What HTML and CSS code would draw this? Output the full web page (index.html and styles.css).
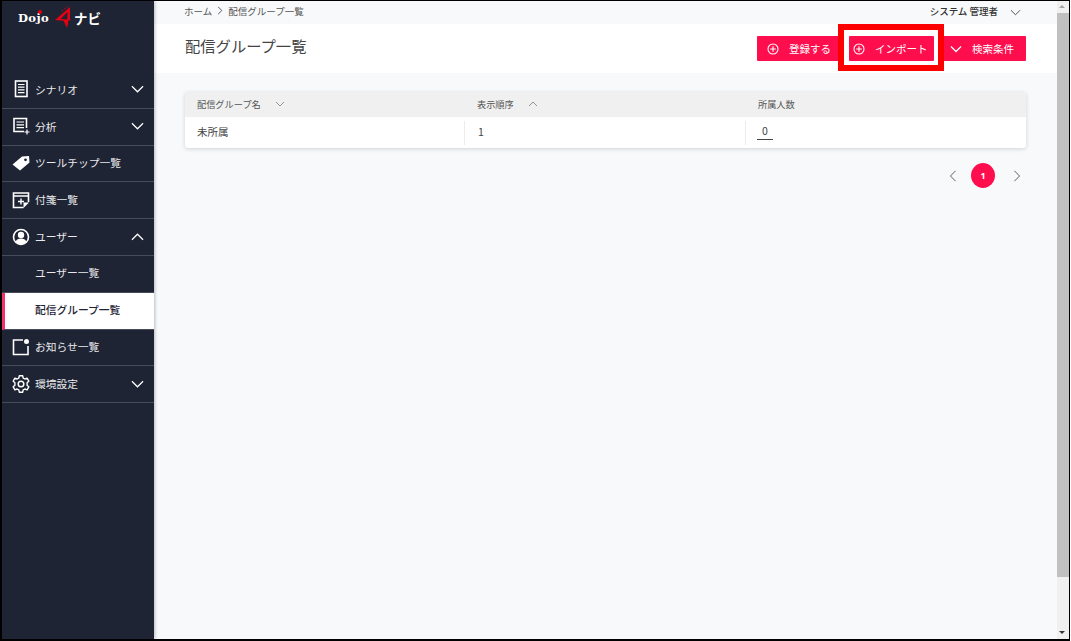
FILE: index.html
```html
<!DOCTYPE html>
<html lang="ja">
<head>
<meta charset="utf-8">
<title>配信グループ一覧</title>
<link rel="stylesheet" href="styles.css">
</head>
<body>
<div class="frame">
  <aside class="sidebar">
    <div class="logo">
      <span class="logo-dojo">Dojo<i class="logo-dot"></i></span>
      <svg class="logo-mark" width="17" height="22" viewBox="0 0 17 22"><path d="M15 1 0 14l8.500 .8L12 22l1.500-7.500 3-.5-1.500-.5zM12.500 6l-.3 7.500-6.500-.5z" fill="#e60012" fill-rule="evenodd"/><path d="M7 5l1-1M9.500 3l1-1M11.500 1.500l1-1" stroke="#e60012" stroke-width="1"/></svg>
      <span class="logo-navi">ナビ</span>
    </div>
    <nav class="menu">
      <div class="item">
        <svg class="ic" viewBox="0 0 18 18"><rect x="3.500" y="1" width="11.500" height="15.500" fill="none" stroke="#fff" stroke-width="1.600"/><path d="M6 4.500h6.500M6 7.200h6.500M6 9.900h6.500M6 12.700h6.500" stroke="#fff" stroke-width="1.200"/></svg>
        <span class="label">シナリオ</span>
        <svg class="chev" viewBox="0 0 14 8"><path d="M1 1l6 6 6-6" fill="none" stroke="#fff" stroke-width="1.300"/></svg>
      </div>
      <div class="item">
        <svg class="ic" viewBox="0 0 18 18"><path d="M14.500 11V1.500H2v13h10" fill="none" stroke="#fff" stroke-width="1.600"/><path d="M4.500 5h7.500M4.500 7.800h7.500M4.500 10.600h7.500M15 12.500v5M12.500 15h5" stroke="#fff" stroke-width="1.200"/></svg>
        <span class="label">分析</span>
        <svg class="chev" viewBox="0 0 14 8"><path d="M1 1l6 6 6-6" fill="none" stroke="#fff" stroke-width="1.300"/></svg>
      </div>
      <div class="item">
        <svg class="ic" viewBox="0 0 18 18"><path d="M.5 10.500 10 2.500l7-.5.500 6.500L8 16.500z" fill="#fff"/><circle cx="13.500" cy="5.800" r="1.400" fill="#1e2433"/></svg>
        <span class="label">ツールチップ一覧</span>
      </div>
      <div class="item">
        <svg class="ic" viewBox="0 0 18 18"><path d="M16.500 11V2H1.500v14.500h10" fill="none" stroke="#fff" stroke-width="1.600"/><path d="M1.500 5h15M9 7.500v6M6 10.500h6" stroke="#fff" stroke-width="1.400"/><path d="M11.500 17l5.500-5.500h-5.500z" fill="#fff"/></svg>
        <span class="label">付箋一覧</span>
      </div>
      <div class="item">
        <svg class="ic" viewBox="0 0 18 18"><circle cx="9" cy="9" r="7.500" fill="none" stroke="#fff" stroke-width="1.600"/><circle cx="9" cy="7" r="3.200" fill="#fff"/><path d="M3.500 14c1-3 3-3.500 5.500-3.500s4.500.5 5.500 3.500a7.500 7.500 0 0 1-11 0z" fill="#fff"/></svg>
        <span class="label">ユーザー</span>
        <svg class="chev" viewBox="0 0 14 8"><path d="M1 7l6-6 6 6" fill="none" stroke="#fff" stroke-width="1.300"/></svg>
      </div>
      <div class="item sub"><span class="label">ユーザー一覧</span></div>
      <div class="item sub active"><span class="label">配信グループ一覧</span></div>
      <div class="item">
        <svg class="ic" viewBox="0 0 18 18"><path d="M11 2H1.500v14.500H16V8" fill="none" stroke="#fff" stroke-width="1.600"/><circle cx="14.500" cy="3.500" r="2.500" fill="#fff"/></svg>
        <span class="label">お知らせ一覧</span>
      </div>
      <div class="item">
        <svg class="ic" viewBox="0 0 18 18"><circle cx="9" cy="9" r="2.800" fill="none" stroke="#fff" stroke-width="1.500"/><path d="M7.300 .8h3.400l.5 2.300 1.700.9 2.200-.8 1.700 3-1.700 1.500v2.600l1.700 1.500-1.700 3-2.200-.8-1.700.9-.5 2.300H7.300l-.5-2.300-1.700-.9-2.200.8-1.700-3 1.700-1.500V7.700L1.200 6.200l1.700-3 2.200.8 1.700-.9z" fill="none" stroke="#fff" stroke-width="1.400" stroke-linejoin="round"/></svg>
        <span class="label">環境設定</span>
        <svg class="chev" viewBox="0 0 14 8"><path d="M1 1l6 6 6-6" fill="none" stroke="#fff" stroke-width="1.300"/></svg>
      </div>
    </nav>
  </aside>
  <main class="main">
    <div class="topbar">
      <div class="crumbs"><span>ホーム</span><svg class="crumb-sep" viewBox="0 0 6 10"><path d="M1 1l4 4-4 4" fill="none" stroke="#555" stroke-width="1.100"/></svg><span>配信グループ一覧</span></div>
      <div class="user"><span>システム 管理者</span><svg class="user-chev" viewBox="0 0 12 7"><path d="M1 1l5 5 5-5" fill="none" stroke="#444" stroke-width="1"/></svg></div>
    </div>
    <header class="head">
      <h1 class="title">配信グループ一覧</h1>
      <div class="actions">
        <button class="btn btn-add"><svg class="btn-ic" viewBox="0 0 12 12"><circle cx="6" cy="6" r="5" fill="none" stroke="#fff" stroke-width="1.100"/><path d="M6 3.200v5.600M3.200 6h5.600" stroke="#fff" stroke-width="1.100"/></svg>登録する</button>
        <button class="btn btn-import"><svg class="btn-ic" viewBox="0 0 12 12"><circle cx="6" cy="6" r="5" fill="none" stroke="#fff" stroke-width="1.100"/><path d="M6 3.200v5.600M3.200 6h5.600" stroke="#fff" stroke-width="1.100"/></svg>インポート</button>
        <button class="btn btn-search"><svg class="btn-ic" viewBox="0 0 12 7"><path d="M1 1l5 5 5-5" fill="none" stroke="#fff" stroke-width="1.300"/></svg>検索条件</button>
      </div>
    </header>
    <section class="content">
      <div class="table">
        <div class="row row-head">
          <div class="cell">配信グループ名<svg class="sort" viewBox="0 0 10 6"><path d="M1 1l4 4 4-4" fill="none" stroke="#888" stroke-width=".9"/></svg></div>
          <div class="cell">表示順序<svg class="sort" viewBox="0 0 10 6"><path d="M1 5l4-4 4 4" fill="none" stroke="#888" stroke-width=".9"/></svg></div>
          <div class="cell">所属人数</div>
        </div>
        <div class="row row-body">
          <div class="cell">未所属</div>
          <div class="cell divided">1</div>
          <div class="cell divided"><span class="count">0</span></div>
        </div>
      </div>
      <div class="pager">
        <svg class="page-arrow" viewBox="0 0 8 14"><path d="M7 1 1 7l6 6" fill="none" stroke="#555" stroke-width="1.100"/></svg>
        <span class="page-num">1</span>
        <svg class="page-arrow" viewBox="0 0 8 14"><path d="M1 1l6 6-6 6" fill="none" stroke="#555" stroke-width="1.100"/></svg>
      </div>
    </section>
  </main>
  <div class="scrollbar">
    <span class="arrow up"></span>
    <div class="track"><div class="thumb"></div></div>
    <span class="arrow down"></span>
  </div>
  <div class="highlight"></div>
</div>
</body>
</html>
```
FILE: styles.css
```css
* { box-sizing: border-box; }
html, body { margin: 0; height: 100%; overflow: hidden; background: #fff; }
body { font-family: "Noto Sans CJK JP", "Noto Sans", sans-serif; color: #333; }
.frame { position: relative; display: flex; width: 1070px; height: 641px; border: 1px solid #000; border-width: 1px 1px 2px 2px; }
.sidebar { width: 152px; flex: none; background: #1e2433; color: #fff; box-shadow: 1px 0 3px rgba(0,0,0,.25); z-index: 1; }
.logo { height: 71px; padding: 5px 0 0 16px; display: flex; align-items: flex-start; }
.logo-dojo { position: relative; font-family: "DejaVu Serif", serif; font-weight: 700; font-size: 11.500px; line-height: 24px; width: 37px; letter-spacing: .4px; }
.logo-dot { position: absolute; left: 20px; top: 4px; width: 4px; height: 4px; border-radius: 50%; background: #e60012; }
.logo-navi { font-size: 13.500px; font-weight: 700; line-height: 24px; margin-left: 2px; }
.item { height: 36.800px; display: flex; align-items: center; padding: 0 10px 1px 10px; border-bottom: 1px solid #474c59; font-size: 10.750px; }
.ic { width: 18px; height: 18px; flex: none; margin-right: 5px; }
.label { flex: 1; color: #e9e9ec; }
.chev { width: 13px; height: 8px; flex: none; }
.sub { padding-bottom: 3px; }
.sub .label { padding-left: 23px; }
.active { background: #fff; border-left: 3px solid #f5326e; padding-left: 7px; }
.active .label { color: #1e2433; font-weight: 500; }
.main { flex: 1; display: flex; flex-direction: column; background: #f8f9fb; min-width: 0; }
.topbar { height: 23px; display: flex; align-items: center; justify-content: space-between; padding: 0 36px 4px 30px; font-size: 9.500px; color: #555; }
.crumbs { display: flex; align-items: center; gap: 5px; }
.crumb-sep { width: 6px; height: 9px; }
.user { display: flex; align-items: center; gap: 12px; font-size: 9.500px; font-weight: 500; color: #333; }
.user-chev { width: 11px; height: 7px; margin-top: 3px; }
.head { height: 49px; background: #fff; display: flex; align-items: flex-start; justify-content: space-between; padding: 11px 31px 0 31px; }
.title { margin: 0; font-size: 15.300px; font-weight: 400; line-height: 21px; color: #444; }
.actions { display: flex; gap: 9px; margin-top: 1px; }
.btn { height: 25px; border: 0; border-radius: 1px; background: #ff0e4e; color: #fff; font: 400 10.500px "Noto Sans CJK JP", sans-serif; white-space: nowrap; display: flex; align-items: center; }
.btn-add { width: 83px; padding-left: 10px; }
.btn-import { width: 85px; padding-left: 4px; }
.btn-search { width: 83px; padding-left: 7px; }
.btn-ic { width: 12px; height: 12px; margin-right: 10px; flex: none; }
.content { flex: 1; padding: 19px 31px 0 31px; }
.table { border-radius: 3px; background: #fff; box-shadow: 0 1px 4px rgba(0,0,0,.16); overflow: hidden; }
.row { display: flex; align-items: center; }
.row-head { height: 25px; background: #f0f0f0; color: #555; font-size: 9.200px; }
.row-head .cell { padding-bottom: 2px; }
.row-body { height: 31px; color: #444; font-size: 10.500px; }
.cell { display: flex; align-items: center; height: 100%; padding-left: 12px; width: 281px; }
.cell:first-child { width: 280px; }
.row-body .cell { padding-bottom: 2px; }
.row-body .cell:first-child { width: 279px; }
.cell:last-child { flex: 1; }
.divided { height: 24px; padding-left: 13px; border-left: 1px solid #ececec; }
.sort { width: 10px; height: 6px; margin-left: 14px; }
.count { border-bottom: 1px solid #444; margin-left: -2px; padding: 0 5px 1px; line-height: 15px; }
.pager { display: flex; align-items: center; justify-content: flex-end; margin-top: 15px; padding-right: 5px; }
.page-arrow { width: 8px; height: 12px; }
.page-num { width: 24px; height: 25px; margin: 0 18px 0 14px; border-radius: 50%; background: #ff0e4e; color: #fff; font: 700 9px "Noto Sans", sans-serif; display: flex; align-items: center; justify-content: center; }
.scrollbar { width: 12px; flex: none; background: #f0f0f0; display: flex; flex-direction: column; }
.arrow { height: 12px; flex: none; position: relative; }
.arrow::after { content: ""; position: absolute; left: 2px; top: 4px; border: 3.500px solid transparent; }
.up::after { border-bottom-color: #a3a3a3; border-top-width: 0; }
.down::after { border-top-color: #333; border-bottom-width: 0; }
.track { flex: 1; }
.thumb { height: 564px; background: #c0c0c0; }
.highlight { position: absolute; left: 836px; top: 23px; width: 106px; height: 47px; border: 6px solid #f00; z-index: 2; pointer-events: none; }
```
